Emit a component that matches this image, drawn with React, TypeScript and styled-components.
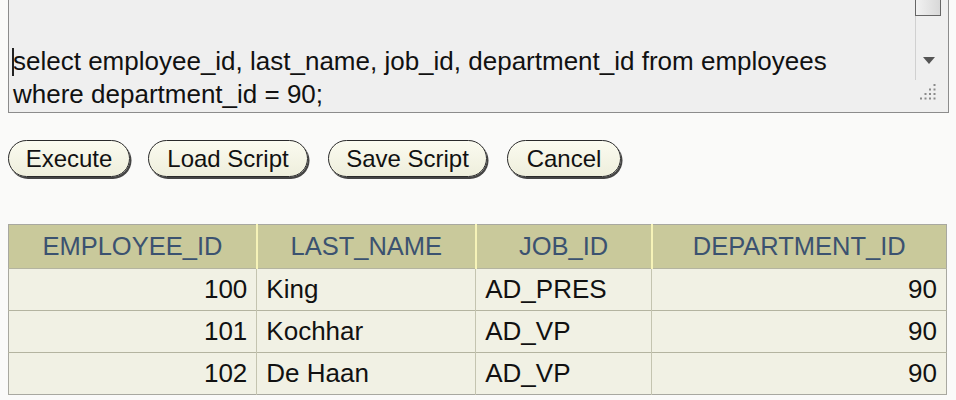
import React from "react";
import styled, { createGlobalStyle } from "styled-components";

const Global = createGlobalStyle`
  html, body { margin: 0; padding: 0; background: #fafaf9; }
  body { font-family: "Liberation Sans", Arial, sans-serif; }
`;

const Page = styled.div`
  width: 956px;
  height: 400px;
  overflow: hidden;
  display: flex;
  flex-direction: column;
`;

const Editor = styled.div`
  margin-left: 8px;
  width: 941px;
  height: 113px;
  box-sizing: border-box;
  border: 1px solid #8c8c8c;
  border-top: none;
  background: #efefef;
  display: flex;
`;

const EditorText = styled.div`
  flex: 1;
  padding: 45px 0 0 4px;
  font-size: 26px;
  line-height: 33px;
  color: #111;
  white-space: pre;
  position: relative;
`;

const Caret = styled.span`
  position: absolute;
  left: 3px;
  top: 48px;
  width: 1.5px;
  height: 28px;
  background: #222;
`;

const Scroll = styled.div`
  width: 33px;
  position: relative;
`;

const Thumb = styled.div`
  position: absolute;
  left: 0;
  top: -4px;
  width: 26px;
  height: 20px;
  box-sizing: border-box;
  border: 1px solid #666;
  background: linear-gradient(90deg, #f2f2f2, #d8d8d8);
`;

const Track = styled.div`
  position: absolute;
  left: 0;
  top: 16px;
  width: 1px;
  height: 64px;
  background: #d0d0d0;
`;

const Buttons = styled.div`
  display: flex;
  gap: 18px;
  margin: 27px 0 0 8px;
`;

const Btn = styled.button<{ $w: number }>`
  width: ${(p) => p.$w}px;
  height: 37px;
  box-sizing: border-box;
  border: 1.5px solid #2a2a2a;
  border-radius: 19px;
  background: linear-gradient(#fbfbf0, #eeeedc);
  box-shadow: 1.5px 2px 0 #444;
  font-family: "Liberation Sans", Arial, sans-serif;
  font-size: 24px;
  color: #111;
  padding: 0;
  display: flex;
  align-items: center;
  justify-content: center;
`;

const Table = styled.table`
  margin: 47px 0 0 8px;
  width: 939px;
  border-collapse: collapse;
  border: 1px solid #a8a8a0;
  font-size: 26px;
`;

const Th = styled.th<{ $w: number }>`
  width: ${(p) => p.$w}px;
  height: 43px;
  padding: 0;
  background: #c9c99b;
  color: #3b5270;
  font-weight: normal;
  font-size: 25.5px;
  text-align: center;
  border-left: 2px solid #f6f3b8;
  &:first-child { border-left: none; }
`;

const Td = styled.td<{ $right?: boolean }>`
  height: 41px;
  padding: 0 9px;
  background: #f1f1e4;
  color: #111;
  text-align: ${(p) => (p.$right ? "right" : "left")};
  border-top: 1px solid #b4b4a0;
  border-left: 1px solid #c4c4b0;
  &:first-child { border-left: none; }
`;

const rows = [
  ["100", "King", "AD_PRES", "90"],
  ["101", "Kochhar", "AD_VP", "90"],
  ["102", "De Haan", "AD_VP", "90"],
];

function Grip() {
  const dots: [number, number][] = [
    [3, 0], [2, 1], [3, 1], [1, 2], [2, 2], [3, 2], [0, 3], [1, 3], [2, 3], [3, 3],
  ];
  return (
    <svg width="20" height="20" style={{ position: "absolute", left: 3, top: 82 }}>
      {dots.map(([x, y], i) => (
        <rect key={i} x={2 + x * 4.5} y={2 + y * 4.5} width="2" height="2" fill="#8a8a8a" />
      ))}
    </svg>
  );
}

export default function App() {
  return (
    <Page>
      <Global />
      <Editor>
        <EditorText>
          <Caret />
          {"select employee_id, last_name, job_id, department_id from employees\nwhere department_id = 90;"}
        </EditorText>
        <Scroll>
          <Thumb />
          <Track />
          <svg width="12" height="8" style={{ position: "absolute", left: 8, top: 57 }}>
            <path d="M0 0 L12 0 L6 7 Z" fill="#555" />
          </svg>
          <Grip />
        </Scroll>
      </Editor>
      <Buttons>
        <Btn $w={122}>Execute</Btn>
        <Btn $w={160} style={{ marginRight: 2 }}>Load Script</Btn>
        <Btn $w={159} style={{ marginRight: 2 }}>Save Script</Btn>
        <Btn $w={114}>Cancel</Btn>
      </Buttons>
      <Table>
        <thead>
          <tr>
            <Th $w={249}>EMPLOYEE_ID</Th>
            <Th $w={219}>LAST_NAME</Th>
            <Th $w={175}>JOB_ID</Th>
            <Th $w={296}>DEPARTMENT_ID</Th>
          </tr>
        </thead>
        <tbody>
          {rows.map((r) => (
            <tr key={r[0]}>
              <Td $right>{r[0]}</Td>
              <Td>{r[1]}</Td>
              <Td>{r[2]}</Td>
              <Td $right>{r[3]}</Td>
            </tr>
          ))}
        </tbody>
      </Table>
    </Page>
  );
}
